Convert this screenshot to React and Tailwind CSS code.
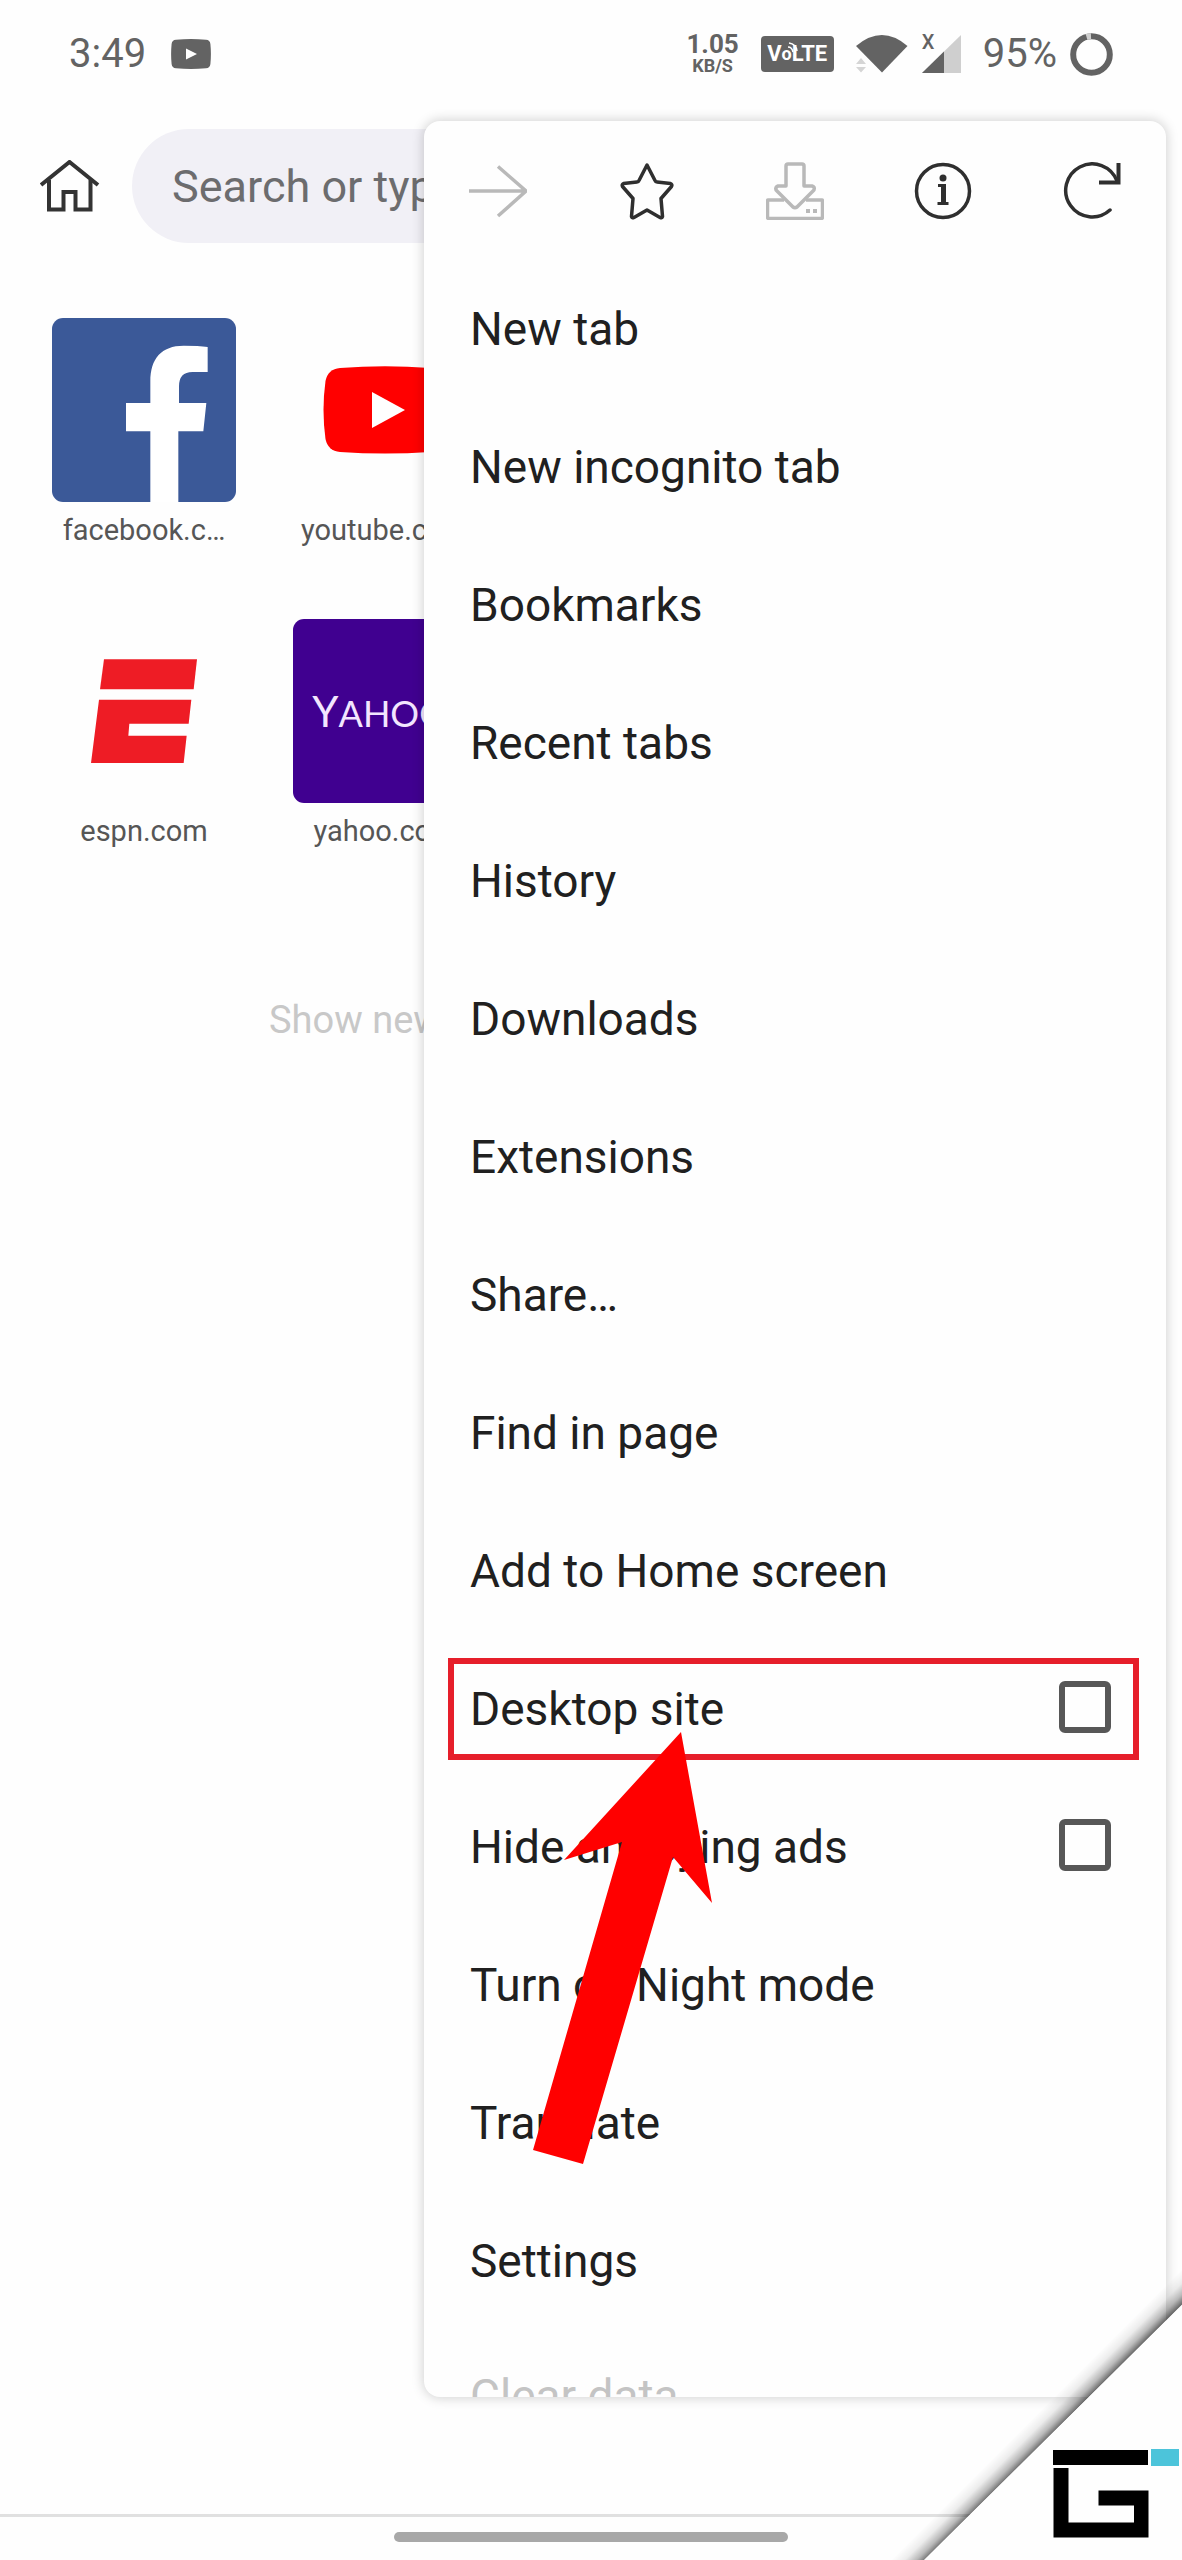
import { useState } from 'react';

const MENU_ITEMS = [
  { label: 'New tab' },
  { label: 'New incognito tab' },
  { label: 'Bookmarks' },
  { label: 'Recent tabs' },
  { label: 'History' },
  { label: 'Downloads' },
  { label: 'Extensions' },
  { label: 'Share…' },
  { label: 'Find in page' },
  { label: 'Add to Home screen' },
  { label: 'Desktop site', checkbox: true, highlighted: true },
  { label: 'Hide annoying ads', checkbox: true },
  { label: 'Turn on Night mode' },
  { label: 'Translate' },
  { label: 'Settings' },
];

// --- Status bar ---
function StatusBar() {
  return (
    <header className="flex h-[108px] items-center justify-between pl-[69px] pr-[69px] text-[40px] text-[#636363]">
      <div className="flex items-center gap-[25px]">
        <span>3:49</span>
        <svg width="40" height="30" viewBox="0 0 40 30" aria-hidden="true">
          <path d="M5 .8Q20-.6 35 .8Q39 1 39.400 5Q40.400 15 39.400 25Q39 29 35 29.300Q20 30.600 5 29.300Q1 29 .6 25Q-.4 15 .6 5Q1 1 5 .8Z" fill="#636363" />
          <path d="M15 9.500V20.500L26 15Z" fill="#fff" />
        </svg>
      </div>

      <div className="flex items-center gap-[22px]">
        <div className="flex flex-col items-center font-bold">
          <span className="text-[26px] leading-[24px]">1.05</span>
          <span className="text-[18px] leading-[20px]">KB/S</span>
        </div>

        <div className="flex h-[36px] w-[73px] items-center justify-center rounded-sm bg-[#636363] text-[22px] font-bold leading-none text-white">
          <span>V</span>
          <span className="relative text-[18px]">
            o
            <svg className="absolute -top-[3px] left-[5px]" width="11" height="12" viewBox="0 0 11 12" fill="none" stroke="#fff" strokeWidth="1.500" aria-hidden="true">
              <path d="M1 5Q5 5 6 10M2 1Q9 2 10 9" />
            </svg>
          </span>
          <span>LTE</span>
        </div>

        <div className="flex items-center gap-[14px]">
          <svg width="52" height="38" viewBox="0 0 52 38" aria-hidden="true">
            <path d="M0 11Q26-11 51.500 11L26 37.500Z" fill="#636363" />
            <path d="M0 29L5 23L10 29ZM0 32H10L5 37.500Z" fill="#d5d5d5" />
          </svg>
          <div className="relative">
            <svg width="39" height="38" viewBox="0 0 39 38" aria-hidden="true">
              <path d="M39 0V38H0Z" fill="#cfcfcf" />
              <path d="M22 16.500V38H0Z" fill="#636363" />
            </svg>
            <span className="absolute left-0 top-0 text-[20px] font-medium leading-[14px]">X</span>
          </div>
        </div>

        <div className="flex items-center gap-[13px]">
          <span>95%</span>
          <svg width="43" height="43" viewBox="0 0 43 43" fill="none" strokeWidth="6" aria-hidden="true">
            <circle cx="21.500" cy="21.500" r="18.300" stroke="#636363" />
            <path d="M16.500 3.900A18.300 18.300 0 0 1 21 3.200" stroke="#cfcfcf" />
          </svg>
        </div>
      </div>
    </header>
  );
}

// --- Shortcut tiles ---
function Tile({ label, className, children }) {
  return (
    <a href="#" className="flex w-[184px] flex-col items-center">
      <span className={'flex size-[184px] items-center justify-center overflow-hidden rounded-[11px] ' + (className || '')}>
        {children}
      </span>
      <span className="mt-[11px] text-[29px] leading-[34px] text-[#565656]">{label}</span>
    </a>
  );
}

function FacebookLogo() {
  return (
    <svg width="184" height="184" viewBox="0 0 552 552" aria-hidden="true">
      <path d="M295 552V340H222V255H295V190C295 122 328 83 395 83Q440 83 467 87V162H425Q381 160 381 205V255H463L454 340H379V552Z" fill="#fff" />
    </svg>
  );
}

function YoutubeLogo() {
  return (
    <svg width="124" height="88" viewBox="0 0 124 88" aria-hidden="true">
      <path d="M17 2Q62-1.500 107 2Q119 3 121.500 15Q125.500 44 121.500 73Q119 85 107 86Q62 89 17 86Q5 85 2.500 73Q-1.500 44 2.500 15Q5 3 17 2Z" fill="#f00" />
      <path d="M49 26V62L82 44Z" fill="#fff" />
    </svg>
  );
}

function EspnLogo() {
  return (
    <svg width="184" height="184" viewBox="0 0 552 552" fill="#ee1c25" aria-hidden="true">
      <path d="M156 121H435L425 211H144Z" />
      <path d="M141 242H418L410 314H232L229 350H404L395 432H117Z" />
    </svg>
  );
}

// --- Menu toolbar ---
function ToolButton({ label, disabled, children }) {
  return (
    <button
      type="button"
      aria-label={label}
      disabled={disabled}
      className="flex flex-1 items-center justify-center text-[#2f2f2f] disabled:text-[#b9b9b9]"
    >
      <svg width="58" height="58" viewBox="0 0 58 58" fill="none" stroke="currentColor" strokeWidth="3.500" aria-hidden="true">
        {children}
      </svg>
    </button>
  );
}

function MenuToolbar() {
  return (
    <div className="flex h-[139px] shrink-0">
      <ToolButton label="Forward" disabled>
        <path d="M0 29H56M29 4.500L57 29L29 54" />
      </ToolButton>
      <ToolButton label="Bookmark this page">
        <path
          strokeLinejoin="round"
          d="M29 3L37 18.500Q37.500 20 39 20L52.500 21.500Q54.500 22.500 53.500 24.500L43 36.500L44.500 54.500Q44 56.500 42 55.500L29 48L16 55.500Q14 56.500 13.500 54.500L15 36.500L4.500 24.500Q3.500 22.500 5.500 21.500L19 20Q20.500 20 21 18.500Z"
        />
      </ToolButton>
      <ToolButton label="Download page" disabled>
        <path strokeLinejoin="round" d="M20 24V4Q20 2 22 2H36Q38 2 38 4V24H46Q49 25 48 28L31 45Q29 46.500 27 45L10 28Q9 25 12 24Z" />
        <path strokeLinejoin="round" d="M18 38H2Q1.500 38 1.500 39V55Q1.500 56.500 3 56.500H55Q56.500 56.500 56.500 55V39Q56.500 38 56 38H40" />
        <path d="M40 49H44M47 49H51" strokeWidth="4" />
      </ToolButton>
      <ToolButton label="Page info">
        <circle cx="29" cy="29" r="26.500" />
        <circle cx="29" cy="16" r="3.500" fill="currentColor" stroke="none" />
        <path d="M24 22H32V40H34.500V43H23.500V40H27V25H24Z" fill="currentColor" stroke="none" />
      </ToolButton>
      <ToolButton label="Reload">
        <path d="M47 48A26.500 26.500 0 1 1 54 19" strokeLinecap="round" />
        <path d="M55.500 1V20.500H36" strokeWidth="4" />
      </ToolButton>
    </div>
  );
}

// --- Menu rows ---
function MenuItem({ item, checked, onToggle }) {
  if (!item.checkbox) {
    return (
      <li>
        <button type="button" className="flex h-[138px] w-full items-center pl-[46px] pr-[56px] text-left">
          {item.label}
        </button>
      </li>
    );
  }

  return (
    <li className="relative">
      <label className="flex h-[138px] items-center justify-between pl-[46px] pr-[55px]">
        {item.label}
        <input
          type="checkbox"
          checked={checked}
          onChange={onToggle}
          className="mb-[4px] size-[52px] appearance-none rounded-md border-6 border-[#575757] checked:bg-[#575757]"
        />
      </label>
      {item.highlighted && (
        <>
          <div className="pointer-events-none absolute inset-y-[18px] left-[24px] right-[27px] border-6 border-[#e61e2a]" />
          <svg
            className="pointer-events-none absolute left-[109px] top-[92px] z-10"
            width="179"
            height="432"
            viewBox="0 0 179 432"
            aria-hidden="true"
          >
            <path d="M148 0L179 171L140 125L50 432L0 418L89 110L31 128Z" fill="#f00" />
          </svg>
        </>
      )}
    </li>
  );
}

// Folded corner with the site mark
function CornerMark() {
  return (
    <svg className="pointer-events-none absolute bottom-0 right-0 z-20" width="300" height="300" viewBox="0 0 300 300" aria-hidden="true">
      <defs>
        <linearGradient id="fold" gradientUnits="userSpaceOnUse" x1="171" y1="172" x2="154" y2="155">
          <stop offset="0" stopColor="#000" stopOpacity="0.550" />
          <stop offset="0.250" stopColor="#000" stopOpacity="0.270" />
          <stop offset="0.600" stopColor="#000" stopOpacity="0.070" />
          <stop offset="1" stopColor="#000" stopOpacity="0" />
        </linearGradient>
      </defs>
      <path d="M340 5L2 340L-16 322L322 -13Z" fill="url(#fold)" />
      <path d="M300 45V300H42Z" fill="#fefefe" />
      <path d="M171 190H266V205H171Z" fill="#000" />
      <path d="M269 189H297V206H269Z" fill="#4cc4da" />
      <path d="M171.500 208H186.500V262.500H252V245.500H216.500V230.500H266.500V277.500H171.500Z" fill="#000" />
    </svg>
  );
}

export default function App() {
  const [checked, setChecked] = useState({});

  const toggle = (label) => setChecked((prev) => ({ ...prev, [label]: !prev[label] }));

  return (
    <div className="relative flex min-h-screen flex-col overflow-hidden bg-[#fefefe] font-['Roboto',sans-serif]">
      <StatusBar />

      {/* Address bar */}
      <div className="mt-[21px] flex h-[114px] items-center gap-[32px] pl-[40px] pr-[60px]">
        <button type="button" aria-label="Home" className="shrink-0 text-[#333]">
          <svg width="60" height="52" viewBox="0 0 60 52" fill="none" stroke="currentColor" strokeWidth="4" aria-hidden="true">
            <path d="M1 25L29.500 2L58 25" />
            <path d="M9 20V49.500H23.500V32H35.500V49.500H50.500V20" />
          </svg>
        </button>
        <input
          type="text"
          aria-label="Search"
          placeholder="Search or type web address"
          className="h-full min-w-0 flex-1 rounded-full bg-[#f1f0f6] pl-[40px] text-[45px] text-[#6c6c6e] placeholder:text-[#6c6c6e]"
        />
      </div>

      <main className="flex flex-1 flex-col">
        <div className="mt-[75px] grid grid-cols-[184px_184px] gap-x-[57px] gap-y-[72px] pl-[52px]">
          <Tile label="facebook.c…" className="bg-[#3b5998]">
            <FacebookLogo />
          </Tile>
          <Tile label="youtube.com">
            <YoutubeLogo />
          </Tile>
          <Tile label="espn.com">
            <EspnLogo />
          </Tile>
          <Tile label="yahoo.com" className="bg-[#400090]">
            <span className="font-['Lato',sans-serif] text-[36px] text-[#f3e6ff]">
              <span className="text-[42px]">Y</span>AHOO!
            </span>
          </Tile>
        </div>
        <button type="button" className="mt-[150px] self-start pl-[269px] text-[38px] leading-[44px] text-[#c8c8c8]">
          Show news
        </button>
      </main>

      <footer className="flex h-[46px] justify-center border-t-3 border-[#e0e0e0] pt-[15px]">
        <div className="h-[10px] w-1/3 rounded-full bg-[#a8a8a8]" />
      </footer>

      {/* Overflow menu */}
      <nav className="absolute bottom-[163px] left-[424px] right-[16px] top-[121px] flex flex-col overflow-hidden rounded-2xl bg-[#fefefe] shadow-[0_0_12px_1px_rgba(0,0,0,0.18)]">
        <MenuToolbar />
        <ul className="text-[46px] text-[#202020]">
          {MENU_ITEMS.map((item) => (
            <MenuItem
              key={item.label}
              item={item}
              checked={!!checked[item.label]}
              onToggle={() => toggle(item.label)}
            />
          ))}
          <li>
            <button type="button" className="flex h-[132px] w-full items-center pl-[46px] text-left text-[#c4c4c4]">
              Clear data
            </button>
          </li>
        </ul>
      </nav>

      <CornerMark />
    </div>
  );
}
